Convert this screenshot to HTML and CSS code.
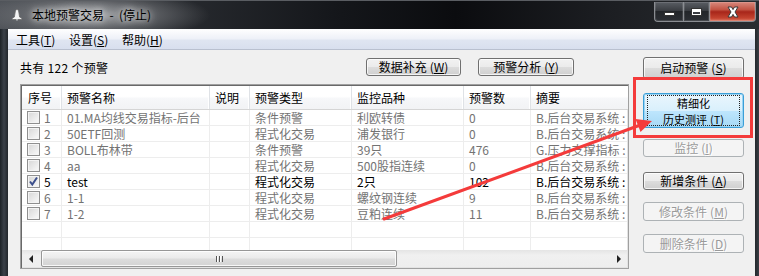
FILE: index.html
```html
<!DOCTYPE html>
<html lang="zh">
<head>
<meta charset="utf-8">
<title>本地预警交易</title>
<link rel="stylesheet" href="styles.css">
</head>
<body>
<div class="win">
  <div class="titlebar">
    <div class="title">
      <svg class="app-icon" width="12" height="12" viewBox="0 0 12 12"><path d="M6 0.5 C7 0.5 7.6 1.5 7.8 3 L8.6 8 L10.8 9.3 L10.8 10.5 L1.2 10.5 L1.2 9.3 L3.4 8 L4.2 3 C4.4 1.5 5 0.5 6 0.5 Z" fill="#f4f4f4" stroke="#6a6a6a" stroke-width="0.8"/><path d="M4.8 10.5 L7.2 10.5 L6 11.8 Z" fill="#f4f4f4"/></svg>
      <span class="title-text">本地预警交易&nbsp;&nbsp;-&nbsp;&nbsp;(停止)</span>
    </div>
    <div class="caps">
      <div class="cap cap-min"><span class="g-min"></span></div>
      <div class="cap cap-max"><span class="g-max"></span></div>
      <div class="cap cap-close"><svg width="16" height="12" viewBox="0 0 16 12"><path d="M3 1 L6.5 1 L8 3.6 L9.5 1 L13 1 L10 6 L13 11 L9.5 11 L8 8.4 L6.5 11 L3 11 L6 6 Z" fill="#fff" stroke="#3a3a3a" stroke-width="1"/></svg></div>
    </div>
  </div>
  <div class="frame">
    <div class="client">
      <div class="menubar">
        <span class="menu-item">工具(<u>T</u>)</span>
        <span class="menu-item">设置(<u>S</u>)</span>
        <span class="menu-item">帮助(<u>H</u>)</span>
      </div>
      <div class="content">
        <div class="main">
          <div class="toolbar">
            <span class="count">共有 122 个预警</span>
            <button class="btn btn-tool">数据补充<span class="ak">(<u>W</u>)</span></button>
            <button class="btn btn-tool">预警分析<span class="ak">(<u>Y</u>)</span></button>
          </div>
          <div class="list">
            <div class="hdr">
              <div class="hc">序号</div>
              <div class="hc">预警名称</div>
              <div class="hc">说明</div>
              <div class="hc">预警类型</div>
              <div class="hc">监控品种</div>
              <div class="hc">预警数</div>
              <div class="hc">摘要</div>
            </div>
            <div class="rows">
              <div class="row"><div class="c c-no"><span class="cb"></span>1</div><div class="c">01.MA均线交易指标-后台</div><div class="c"></div><div class="c">条件预警</div><div class="c">利欧转债</div><div class="c">0</div><div class="c">B.后台交易系统 :</div></div>
              <div class="row"><div class="c c-no"><span class="cb"></span>2</div><div class="c">50ETF回测</div><div class="c"></div><div class="c">程式化交易</div><div class="c">浦发银行</div><div class="c">0</div><div class="c">B.后台交易系统 :</div></div>
              <div class="row"><div class="c c-no"><span class="cb"></span>3</div><div class="c">BOLL布林带</div><div class="c"></div><div class="c">条件预警</div><div class="c">39只</div><div class="c">476</div><div class="c">G.压力支撑指标 :</div></div>
              <div class="row"><div class="c c-no"><span class="cb"></span>4</div><div class="c">aa</div><div class="c"></div><div class="c">程式化交易</div><div class="c">500股指连续</div><div class="c">0</div><div class="c">B.后台交易系统 :</div></div>
              <div class="row row-on"><div class="c c-no"><span class="cb"><svg width="11" height="11" viewBox="0 0 11 11"><path d="M2 5.5 L4.3 8.5 L9 1.5" fill="none" stroke="#3c4f8c" stroke-width="2"/></svg></span>5</div><div class="c">test</div><div class="c"></div><div class="c">程式化交易</div><div class="c">2只</div><div class="c">102</div><div class="c">B.后台交易系统 :</div></div>
              <div class="row"><div class="c c-no"><span class="cb"></span>6</div><div class="c">1-1</div><div class="c"></div><div class="c">程式化交易</div><div class="c">螺纹钢连续</div><div class="c">9</div><div class="c">B.后台交易系统 :</div></div>
              <div class="row"><div class="c c-no"><span class="cb"></span>7</div><div class="c">1-2</div><div class="c"></div><div class="c">程式化交易</div><div class="c">豆粕连续</div><div class="c">11</div><div class="c">B.后台交易系统 :</div></div>
              <div class="row"><div class="c c-no"></div><div class="c"></div><div class="c"></div><div class="c"></div><div class="c"></div><div class="c"></div><div class="c"></div></div>
              <div class="row"><div class="c c-no"></div><div class="c"></div><div class="c"></div><div class="c"></div><div class="c"></div><div class="c"></div><div class="c"></div></div>
            </div>
            <div class="hscroll">
              <div class="sb-arrow"><span class="tri-l"></span></div>
              <div class="sb-thumb"><span class="grip"></span></div>
              <div class="sb-track"></div>
              <div class="sb-arrow"><span class="tri-r"></span></div>
            </div>
          </div>
        </div>
        <div class="side">
          <button class="btn btn-start">启动预警<span class="ak">(<u>S</u>)</span></button>
          <button class="btn btn-focus"><span class="focus-ring"><span class="fl">精细化</span><span class="fl">历史测评<span class="ak">(<u>T</u>)</span></span></span></button>
          <button class="btn btn-off btn-mon">监控<span class="ak">(<u>I</u>)</span></button>
          <button class="btn btn-add">新增条件<span class="ak">(<u>A</u>)</span></button>
          <button class="btn btn-off btn-edit">修改条件<span class="ak">(<u>M</u>)</span></button>
          <button class="btn btn-off btn-del">删除条件<span class="ak">(<u>D</u>)</span></button>
        </div>
      </div>
    </div>
  </div>
  <svg class="annot" width="759" height="276" viewBox="0 0 759 276">
    <rect x="634.5" y="78.5" width="117" height="58" fill="none" stroke="#f43b3b" stroke-width="3"/>
    <line x1="384" y1="219" x2="639" y2="125.5" stroke="#f43b3b" stroke-width="3" stroke-linecap="round"/>
    <path d="M652 121 L640.5 132 L635.5 119 Z" fill="#f43b3b"/>
  </svg>
</div>
</body>
</html>
```
FILE: styles.css
```css
* { box-sizing: border-box; margin: 0; padding: 0; }
html, body { width: 759px; height: 276px; overflow: hidden; }
body {
  background: #101215;
  font-family: "Noto Sans CJK SC", "Microsoft YaHei", sans-serif;
  font-size: 12px;
  color: #000;
}
.win { position: relative; display: flex; flex-direction: column; height: 276px; }

/* title bar */
.titlebar {
  height: 29px;
  display: flex;
  justify-content: space-between;
  align-items: flex-start;
  background:
    radial-gradient(ellipse 120px 26px at 90px 14px, rgba(190,192,195,0.85) 0%, rgba(120,122,126,0.6) 55%, rgba(60,62,66,0) 100%),
    linear-gradient(90deg, #4b4f55 0%, #2c2f34 18%, #14161a 45%, #0b0c0f 60%, #1c1e22 80%, #2a2d31 100%);
  border-top: 1px solid #5a5d62;
}
.title { display: flex; align-items: center; height: 28px; padding-left: 11px; gap: 7px; }
.app-icon { display: block; }
.title-text {
  font-size: 12px;
  color: #000;
  line-height: 16px;
  padding: 0 2px;
  text-shadow: 0 0 6px #e6e6e6, 0 0 10px #d0d0d0;
}
.caps { display: flex; margin-top: 1px; margin-right: 3px; }
.cap {
  height: 20px;
  display: flex; align-items: center; justify-content: center;
  border: 1px solid #8a8d92;
  border-top: none;
  background: linear-gradient(#5a5e64 0%, #3a3d42 45%, #23262a 50%, #2c2f34 100%);
  box-shadow: inset 0 0 0 1px rgba(255,255,255,0.12);
}
.cap-min { width: 29px; border-radius: 0 0 0 4px; border-right: none; }
.cap-max { width: 26px; border-right: none; }
.cap-close {
  width: 47px;
  border-radius: 0 0 4px 0;
  background: linear-gradient(#d88a7e 0%, #c25343 40%, #a8261a 52%, #c4432f 85%, #de7a66 100%);
}
.g-min { display: block; width: 11px; height: 4px; margin-top: 5px; background: #fff; border: 1px solid #333; }
.g-max { display: block; width: 11px; height: 8px; border: 1px solid #333; box-shadow: inset 0 0 0 1px #fff, inset 0 2px 0 1px #fff; background: #3a3d42; }

/* frame & client */
.frame {
  flex: 1;
  display: flex;
  padding: 0 4px 0 8px;
  background: linear-gradient(90deg, #1d2227 0%, #3b4149 4px, #23272c 8px, #23272c calc(100% - 4px), #3a3e44 100%);
}
.client { flex: 1; display: flex; flex-direction: column; background: #f0f0f0; }
.menubar {
  height: 21px;
  display: flex; align-items: center;
  padding-left: 8px;
  border-top: 1px solid #fbfcfd;
  border-bottom: 1px solid #b9c0cf;
  background: linear-gradient(#fdfdfe 0%, #eef1f8 45%, #dfe5f1 55%, #d8dfee 100%);
}
.menu-item { width: 53px; font-size: 12px; line-height: 16px; }
u { text-decoration: underline; text-underline-offset: 1px; }
.ak { margin-left: 3px; }

.content { flex: 1; display: flex; gap: 14px; padding: 0 11px 0 12px; }
.main { width: 609px; display: flex; flex-direction: column; }
.toolbar { height: 34px; display: flex; align-items: center; padding-right: 55px; gap: 17px; }
.count { flex: 1; font-size: 12px; letter-spacing: 0.3px; }

/* buttons */
.btn {
  display: flex; align-items: center; justify-content: center;
  font-family: "Noto Sans CJK SC", sans-serif;
  font-size: 12px;
  line-height: 14px;
  color: #000;
  border: 1px solid #707070;
  border-radius: 3px;
  background: linear-gradient(#f2f2f2 0%, #ebebeb 50%, #dddddd 50%, #cfcfcf 100%);
  box-shadow: inset 0 0 0 1px rgba(255,255,255,0.75);
}
.btn-tool { width: 96px; height: 18px; }
.btn-tool:first-of-type { width: 95px; }
.side { width: 101px; display: flex; flex-direction: column; padding-top: 7px; }
.side .btn { width: 101px; }
.btn-start { height: 22px; }
.btn-focus {
  height: 35px; margin-top: 14px;
  border-color: #3c9fd7;
  background: linear-gradient(#eaf6fd 0%, #d9f0fc 50%, #bee6fd 50%, #a7d9f5 100%);
  box-shadow: inset 0 0 0 1px #9ad4f5;
  padding: 0 2px;
  align-items: stretch;
}
.focus-ring {
  flex: 1;
  display: flex; flex-direction: column; align-items: center; justify-content: center;
  outline: 1px dotted #222;
  outline-offset: -2px;
}
.fl { display: block; line-height: 16px; height: 16px; font-size: 11px; white-space: nowrap; }
.btn-off {
  color: #9a9a9a;
  border-color: #adb2b5;
  background: #f4f4f4;
  box-shadow: none;
  text-shadow: 1px 1px 0 #fff;
}
.btn-mon { height: 18px; margin-top: 11px; }
.btn-add { height: 18px; margin-top: 15px; }
.btn-edit { height: 19px; margin-top: 12px; }
.btn-del { height: 19px; margin-top: 13px; }

/* list view */
.list {
  height: 185px;
  display: flex; flex-direction: column;
  border: 1px solid #a0a0a0;
  box-shadow: inset 1px 1px 0 #696969, inset -1px -1px 0 #e3e3e3;
  padding: 1px;
  background: #fff;
  overflow: hidden;
}
.hdr, .row { display: grid; grid-template-columns: 40px 148px 40px 102px 112px 67px 200px; width: 709px; }
.hdr {
  height: 24px;
  background: linear-gradient(#ffffff 0%, #ffffff 45%, #f6f7f9 55%, #f2f3f5 100%);
  border-bottom: 1px solid #d5d5d5;
}
.hc {
  display: flex; align-items: center;
  padding-left: 5px;
  font-size: 12px;
  border-right: 1px solid #dfe2e6;
  box-shadow: inset -1px 0 0 #fff;
}
.hc:first-child { padding-left: 6px; }
.rows { height: 140px; overflow: hidden; }
.row { height: 16px; }
.c {
  display: flex; align-items: center;
  padding-left: 5px;
  font-size: 12px;
  line-height: 15px;
  color: #737373;
  white-space: nowrap;
  overflow: hidden;
  border-right: 1px solid #ededed;
  border-bottom: 1px solid #ededed;
}
.c-no { padding-left: 5px; gap: 4px; }
.row-on .c { color: #000; }
.cb {
  width: 13px; height: 13px;
  display: flex; align-items: center; justify-content: center;
  border: 1px solid #8f8f8f;
  background: linear-gradient(135deg, #d6d6d6 0%, #ececec 60%, #fafafa 100%);
  box-shadow: inset 0 0 0 1px #f4f4f4;
}

/* scrollbar */
.hscroll {
  height: 17px;
  display: flex;
  background: linear-gradient(#e4e4e4 0%, #f0f0f0 30%, #eeeeee 100%);
  width: 605px;
}
.sb-arrow { width: 18px; display: flex; align-items: center; justify-content: center; }
.sb-arrow:last-child { width: 17px; }
.tri-l { width: 0; height: 0; border-top: 4px solid transparent; border-bottom: 4px solid transparent; border-right: 4px solid #222; }
.tri-r { width: 0; height: 0; border-top: 4px solid transparent; border-bottom: 4px solid transparent; border-left: 4px solid #222; }
.sb-thumb {
  width: 356px;
  margin-left: 1px;
  display: flex; align-items: center; justify-content: center;
  border: 1px solid #979797;
  border-radius: 2px;
  background: linear-gradient(#f4f4f4 0%, #ebebeb 45%, #dcdcdc 55%, #d3d3d3 100%);
  box-shadow: inset 0 0 0 1px rgba(255,255,255,0.8);
}
.grip {
  width: 7px; height: 6px;
  background: repeating-linear-gradient(90deg, #555 0 1px, #fff 1px 2px, transparent 2px 3px);
}
.sb-track { flex: 1; }

/* annotation overlay */
.annot { position: absolute; left: 0; top: 0; pointer-events: none; }
```
